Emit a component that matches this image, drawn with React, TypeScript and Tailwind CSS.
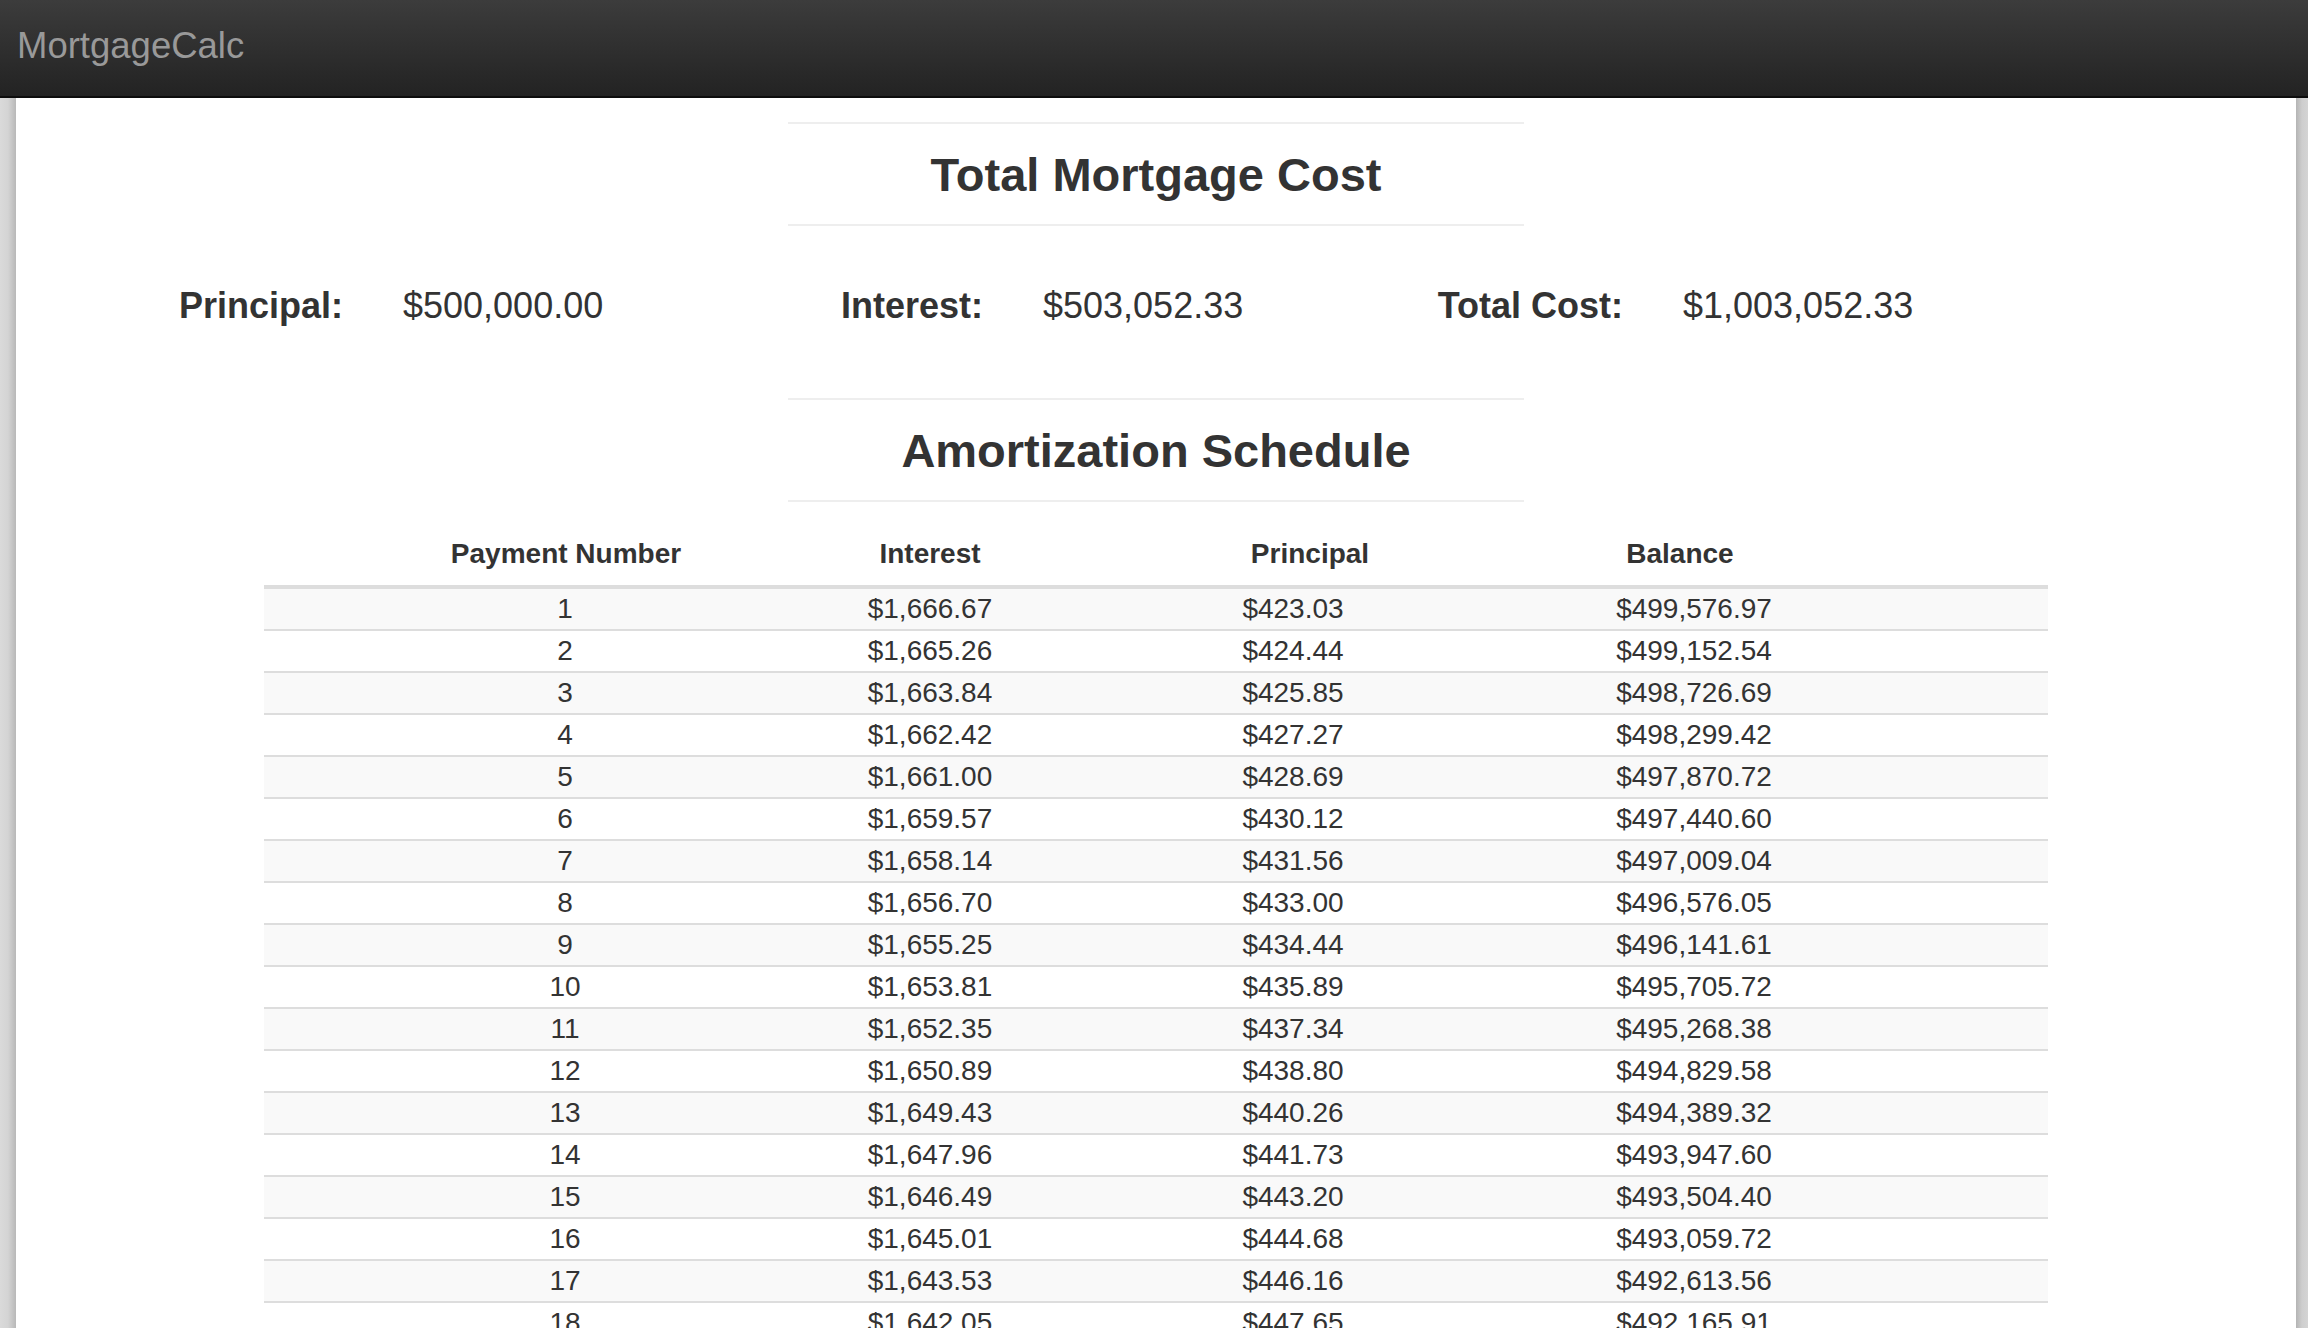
const rows: [string, string, string, string][] = [
  ['1', '$1,666.67', '$423.03', '$499,576.97'],
  ['2', '$1,665.26', '$424.44', '$499,152.54'],
  ['3', '$1,663.84', '$425.85', '$498,726.69'],
  ['4', '$1,662.42', '$427.27', '$498,299.42'],
  ['5', '$1,661.00', '$428.69', '$497,870.72'],
  ['6', '$1,659.57', '$430.12', '$497,440.60'],
  ['7', '$1,658.14', '$431.56', '$497,009.04'],
  ['8', '$1,656.70', '$433.00', '$496,576.05'],
  ['9', '$1,655.25', '$434.44', '$496,141.61'],
  ['10', '$1,653.81', '$435.89', '$495,705.72'],
  ['11', '$1,652.35', '$437.34', '$495,268.38'],
  ['12', '$1,650.89', '$438.80', '$494,829.58'],
  ['13', '$1,649.43', '$440.26', '$494,389.32'],
  ['14', '$1,647.96', '$441.73', '$493,947.60'],
  ['15', '$1,646.49', '$443.20', '$493,504.40'],
  ['16', '$1,645.01', '$444.68', '$493,059.72'],
  ['17', '$1,643.53', '$446.16', '$492,613.56'],
  ['18', '$1,642.05', '$447.65', '$492,165.91'],
  ['19', '$1,640.55', '$449.15', '$491,716.76'],
]

const stats = [
  { label: 'Principal:', value: '$500,000.00' },
  { label: 'Interest:', value: '$503,052.33' },
  { label: 'Total Cost:', value: '$1,003,052.33' },
]

function SectionTitle({ children }: { children: string }) {
  return (
    <div className="mx-auto w-[736px]">
      <div className="h-[2px] bg-[#eeeeee]" />
      <h2 className="flex h-[100px] items-center justify-center text-[47px] font-bold leading-none text-[#333333]">
        {children}
      </h2>
      <div className="h-[2px] bg-[#eeeeee]" />
    </div>
  )
}

export default function App() {
  return (
    <div className="flex h-[1328px] w-[2308px] flex-col overflow-hidden bg-white font-['Liberation_Sans',Arial,sans-serif] text-[#333333]">
      <header className="flex h-[98px] shrink-0 items-center border-b-2 border-[#0d0d0d] bg-gradient-to-b from-[#3c3c3c] to-[#232323] pb-[5px] pl-[17px]">
        <span className="text-[36.5px] leading-[36px] text-[#999999]">
          MortgageCalc
        </span>
      </header>

      <div className="flex min-h-0 flex-1">
        <div className="w-[16px] shrink-0 bg-gradient-to-r from-[#dadada] via-[#d4d4d4] to-[#b8b8b8]" />

        <main className="min-w-0 flex-1 bg-white pt-[24px]">
          <SectionTitle>Total Mortgage Cost</SectionTitle>

          <div className="flex pb-[72px] pl-[127px] pt-[60px]">
            {stats.map((s) => (
              <div key={s.label} className="flex w-[640px] text-[36px] leading-[40px]">
                <span className="w-[200px] whitespace-nowrap text-right font-bold">
                  {s.label}
                </span>
                <span className="ml-[60px] whitespace-nowrap">{s.value}</span>
              </div>
            ))}
          </div>

          <SectionTitle>Amortization Schedule</SectionTitle>

          <div className="ml-[248px] mt-[21px] w-[1784px]">
            <div className="flex h-[66px] items-center border-b-4 border-[#dddddd] pb-[1px] text-[28px] font-bold">
              <span className="ml-[152px] w-[300px] text-center">Payment Number</span>
              <span className="ml-[64px] w-[300px] text-center">Interest</span>
              <span className="ml-[80px] w-[300px] text-center">Principal</span>
              <span className="ml-[70px] w-[300px] text-center">Balance</span>
            </div>
            {rows.map((r, i) => (
              <div
                key={r[0]}
                className={`flex items-center text-[28px] ${
                  i === 0 ? 'h-[40px]' : 'h-[42px] border-t-2 border-[#dddddd]'
                } ${i % 2 === 0 ? 'bg-[#f9f9f9]' : 'bg-white'}`}
              >
                <span className="ml-[151px] w-[300px] text-center">{r[0]}</span>
                <span className="ml-[65px] w-[300px] text-center">{r[1]}</span>
                <span className="ml-[63px] w-[300px] text-center">{r[2]}</span>
                <span className="ml-[101px] w-[300px] text-center">{r[3]}</span>
              </div>
            ))}
          </div>
        </main>

        <div className="w-[12px] shrink-0 bg-gradient-to-r from-[#b4b4b4] via-[#cecece] to-[#d4d4d4]" />
      </div>
    </div>
  )
}
